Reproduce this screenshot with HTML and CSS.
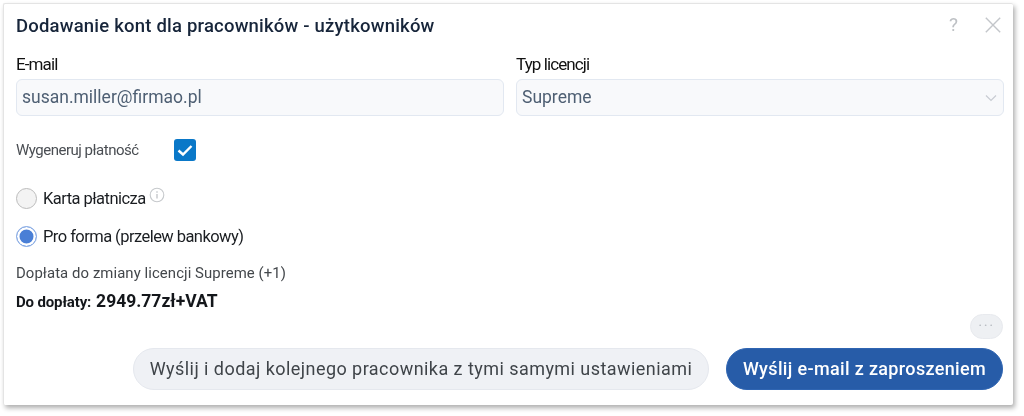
FILE: index.html
```html
<!DOCTYPE html>
<html lang="pl">
<head>
<meta charset="utf-8">
<title>Dodawanie kont</title>
<link rel="stylesheet" href="styles.css">
</head>
<body>
<div class="modal">
  <header class="head">
    <h1 class="title">Dodawanie kont dla pracowników - użytkowników</h1>
    <div class="tools">
      <span class="help">?</span>
      <svg class="close" width="16" height="16" viewBox="0 0 16 16"><path d="M.8.8 15.2 15.2M15.2.8.8 15.2" fill="none" stroke="#c3c6ca" stroke-width="1.4"/></svg>
    </div>
  </header>
  <div class="fields">
    <div class="field">
      <label class="label">E-mail</label>
      <div class="input">susan.miller@firmao.pl</div>
    </div>
    <div class="field">
      <label class="label">Typ licencji</label>
      <div class="input select">Supreme
        <svg class="chev" width="12" height="8" viewBox="0 0 12 8"><path d="M1 1.5 6 6.5 11 1.5" fill="none" stroke="#c8ccd2" stroke-width="1.2"/></svg>
      </div>
    </div>
  </div>
  <div class="gen">
    <span class="gen-label">Wygeneruj płatność</span>
    <span class="check"><svg width="22" height="22" viewBox="0 0 22 22"><path d="M4.5 11.5 9 15.5 17.5 7" fill="none" stroke="#fff" stroke-width="2.4"/></svg></span>
  </div>
  <div class="radio-row first">
    <span class="radio"></span>
    <span class="radio-label">Karta płatnicza</span>
    <svg class="info" width="16" height="16" viewBox="0 0 16 16"><circle cx="8" cy="8" r="6.8" fill="none" stroke="#c6c9cc" stroke-width="1.1"/><path d="M8 7v4.6M8 4.2v1.5" stroke="#c0c3c7" stroke-width="1.3" fill="none"/></svg>
  </div>
  <div class="radio-row second">
    <span class="radio on"></span>
    <span class="radio-label">Pro forma (przelew bankowy)</span>
  </div>
  <p class="note">Dopłata do zmiany licencji Supreme (+1)</p>
  <p class="due"><b class="due-label">Do dopłaty:</b> <b class="due-sum">2949.77zł+VAT</b></p>
  <div class="more-row"><span class="more">···</span></div>
  <footer class="actions">
    <span class="btn light">Wyślij i dodaj kolejnego pracownika z tymi samymi ustawieniami</span>
    <span class="btn primary">Wyślij e-mail z zaproszeniem</span>
  </footer>
</div>
</body>
</html>
```

FILE: styles.css
```css
* { box-sizing: border-box; }
html, body { margin: 0; height: 100%; background: #fff; }
body { padding: 3px 11px 11px 3px; font-family: Roboto, "Liberation Sans", sans-serif; overflow: hidden; }
.modal {
  width: 1010px; height: 402px; background: #fff; border-radius: 2px;
  border: 1px solid #e4e4e4; border-right: 0; border-bottom: 0;
  box-shadow: 2px 3px 5px rgba(0,0,0,.32);
  padding: 0 10px 0 12px; display: flex; flex-direction: column;
  filter: blur(.35px);
}
.head { display: flex; justify-content: space-between; align-items: center; height: 44px; }
.title { margin: 0; font-size: 18.5px; font-weight: 500; color: #17253a; letter-spacing: .2px; }
.tools { display: flex; align-items: center; gap: 27px; margin-right: 2px; margin-top: -2px; }
.help { font-size: 19px; line-height: 20px; color: #bdc0c4; }
.close { display: block; }
.fields { display: grid; grid-template-columns: 488px 488px; gap: 12px; margin-top: 7px; }
.label { display: block; font-size: 17px; line-height: 19px; color: #111; letter-spacing: -.9px; margin-bottom: 5px; }
.input {
  height: 37px; background: #f8f9fb; border: 1px solid #e2e8f1; border-radius: 6px;
  font-size: 17.5px; line-height: 35px; padding: 0 5px; color: #4e5f73;
}
.select { display: flex; justify-content: space-between; align-items: center; padding-right: 6px; }
.gen { display: flex; align-items: center; margin-top: 22px; height: 24px; }
.gen-label { width: 158px; font-size: 15px; color: #4a4e53; letter-spacing: -.5px; }
.check { width: 22px; height: 22px; background: #0a78c8; border-radius: 3px; display: block; }
.check svg { display: block; }
.radio-row { display: flex; align-items: center; height: 22px; }
.first { margin-top: 25px; }
.second { margin-top: 16px; }
.radio { width: 21px; height: 21px; border-radius: 50%; background: #f3f3f3; border: 1.5px solid #bcbcbc; margin-right: 6px; flex: none; }
.radio.on { background: #4a7fd6; border: 1.5px solid #8fb0e6; box-shadow: inset 0 0 0 2.5px #fff; }
.radio-label { font-size: 16.5px; color: #1a1d21; letter-spacing: -.55px; }
.info { margin: -6px 0 0 3px; }
.note { margin: 17px 0 0; font-size: 14.9px; line-height: 18px; color: #43474b; letter-spacing: .08px; }
.due { margin: 9px 0 0; line-height: 20px; color: #14171b; }
.due-label { font-size: 15px; font-weight: 700; letter-spacing: -.15px; margin-right: 1px; }
.due-sum { font-size: 17.5px; font-weight: 700; letter-spacing: 0; }
.more-row { display: flex; justify-content: flex-end; height: 26px; align-items: flex-start; }
.more { width: 33px; height: 25px; border-radius: 13px; background: #eef0f3; border: 1px solid #e8eaee; color: #b8bcc2; font-size: 15px; line-height: 23px; text-align: center; letter-spacing: 1.5px; margin-top: 2px; }
.actions { display: flex; justify-content: flex-end; gap: 17px; margin-top: 10px; }
.btn { height: 42px; border-radius: 21px; font-size: 18px; line-height: 40px; text-align: center; letter-spacing: .45px; font-weight: 400; }
.light { width: 576px; background: #eff1f5; border: 1px solid #e5e8ee; color: #3f4449; }
.primary { width: 277px; background: #275ca8; border: 1px solid #2f65b2; color: #fff; font-weight: 500; letter-spacing: .35px; }
```
